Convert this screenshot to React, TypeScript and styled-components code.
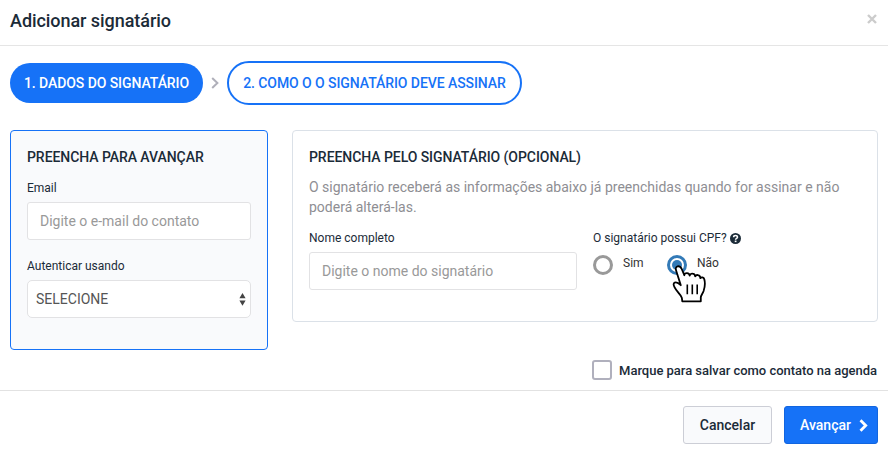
import React from "react";
import styled, { createGlobalStyle, css } from "styled-components";

const ink = "#1b2b38";
const blue = "#1672f7";

const GlobalStyle = createGlobalStyle`
  *, *::before, *::after { box-sizing: border-box; }
  body { margin: 0; background: #fff; color: ${ink}; font-family: Roboto, "Liberation Sans", sans-serif; }
`;

const Dialog = styled.main`
  display: flex;
  flex-direction: column;
  width: 888px;
  height: 457px;
  overflow: hidden;
  background: #fff;
`;

const Header = styled.header`
  display: flex;
  justify-content: space-between;
  height: 46px;
  padding: 9px 10px 0;
  border-bottom: 1px solid #e5e5e5;
`;

const Heading = styled.h1`
  margin: 0;
  font-size: 18px;
  line-height: 24px;
  font-weight: 500;
  letter-spacing: -0.06px;
`;

const Close = styled.button`
  width: 12px;
  height: 20px;
  padding: 0;
  border: 0;
  background: none;
  display: flex;
  align-items: center;
  justify-content: center;
`;

const Body = styled.section`
  flex: 1;
  padding: 15px 10px 0;
`;

const Steps = styled.nav`
  display: flex;
  align-items: center;
  height: 44px;
`;

const Step = styled.span<{ $active?: boolean }>`
  display: flex;
  align-items: center;
  justify-content: center;
  border-radius: 22px;
  font-size: 14px;
  font-weight: 500;
  letter-spacing: -0.07px;
  white-space: nowrap;
  ${({ $active }) =>
    $active
      ? css`width: 193px; height: 40px; background: ${blue}; color: #fff;`
      : css`width: 295px; height: 44px; border: 2px solid ${blue}; color: ${blue};`}
`;

const StepArrow = styled.svg`
  width: 8px;
  height: 12px;
  margin: 0 8px;
`;

const Panels = styled.div`
  display: grid;
  grid-template-columns: 258px 586px;
  column-gap: 24px;
  align-items: start;
  margin-top: 25px;
`;

const Panel = styled.section<{ $current?: boolean }>`
  height: ${({ $current }) => ($current ? 220 : 192)}px;
  padding: 16px;
  border: 1px solid ${({ $current }) => ($current ? blue : "#dbe1e8")};
  border-radius: 4px;
  background: ${({ $current }) => ($current ? "#f9fafc" : "#fff")};
`;

const PanelTitle = styled.h2`
  margin: 0;
  font-size: 14px;
  line-height: 20px;
  font-weight: 500;
  letter-spacing: -0.06px;
  white-space: nowrap;
`;

const Description = styled.p`
  margin: 10px 0 0;
  color: #8e8e93;
  font-size: 14px;
  line-height: 20px;
`;

const Field = styled.div<{ $top: number }>`
  margin-top: ${({ $top }) => $top}px;
`;

const Label = styled.label`
  display: flex;
  align-items: center;
  height: 20px;
  margin-bottom: 4px;
  font-size: 12px;
  white-space: nowrap;
`;

const Input = styled.input`
  display: block;
  width: 100%;
  height: 38px;
  padding: 0 12px;
  border: 1px solid #e2e2e4;
  border-radius: 3px;
  background: #fff;
  color: #555;
  font: 14px Roboto, sans-serif;
  outline: 0;
  &::placeholder { color: #999; opacity: 1; }
`;

const SelectBox = styled.div`
  display: flex;
  align-items: center;
  justify-content: space-between;
  height: 38px;
  padding: 0 4px 0 8px;
  border: 1px solid #e2e2e4;
  border-radius: 5px;
  background: #fff;
  color: #555;
  font-size: 14px;
`;

const FieldRow = styled.div`
  display: grid;
  grid-template-columns: 268px 1fr;
  column-gap: 16px;
`;

const HelpIcon = styled.svg`
  width: 11px;
  height: 11px;
  margin-left: 3px;
`;

const Radios = styled.div`
  display: flex;
  margin-top: 7px;
`;

const Option = styled.div`
  position: relative;
  display: flex;
  width: 74px;
  height: 20px;
  gap: 10px;
  color: #333;
  font-size: 12px;
  line-height: 16px;
`;

const RadioMark = styled.svg`
  width: 20px;
  height: 20px;
`;

const HandCursor = styled.svg`
  position: absolute;
  left: 4px;
  top: 10px;
  width: 36px;
  height: 40px;
`;

const SaveContact = styled.label`
  display: flex;
  align-items: center;
  justify-content: flex-end;
  gap: 7px;
  height: 20px;
  margin-top: 10px;
  padding-right: 1px;
  font-size: 13px;
  font-weight: 500;
  letter-spacing: -0.02px;
  white-space: nowrap;
`;

const Checkbox = styled.span`
  width: 20px;
  height: 20px;
  border: 2px solid #b0b0bd;
  border-radius: 3px;
  background: #fff;
`;

const Footer = styled.footer`
  display: flex;
  justify-content: flex-end;
  gap: 12px;
  height: 67px;
  padding: 15px 10px 0;
  border-top: 1px solid #e2e2e2;
`;

const Button = styled.button<{ $primary?: boolean }>`
  display: flex;
  align-items: center;
  justify-content: center;
  gap: 8px;
  width: ${({ $primary }) => ($primary ? 94 : 89)}px;
  height: 38px;
  padding: 0 0 0 ${({ $primary }) => ($primary ? 6 : 0)}px;
  border: 1px solid ${({ $primary }) => ($primary ? "#1265df" : "#ccced6")};
  border-radius: 3px;
  background: ${({ $primary }) => ($primary ? blue : "#f9fafc")};
  color: ${({ $primary }) => ($primary ? "#fff" : ink)};
  font: 500 14px Roboto, sans-serif;
`;

function Hand() {
  return (
    <HandCursor viewBox="0 0 36 40">
      <path
        d="M5.1 5.4C4.3 3.3 5.1 1.8 6.6 1.4C8.2 1 9.8 2 10.5 3.5L13.3 10.2C13.3 8.8 14.5 8 16 8.1C17.6 8.2 18.4 9.2 18.7 10.5C19.1 9 20.2 8.4 21.6 8.6C23.4 8.8 24 10 24.2 11.4C24.7 10.2 25.8 9.8 27.1 10.1C28.7 10.4 29.3 11.6 29.4 13.1C30.4 11.9 32.7 12.2 33.3 14.3C34.1 17.3 33.8 22.5 32.6 26C31.6 28.7 30 30.3 29.8 32.3L29.8 36.3H11.3L10.8 32.7C9.8 29.6 5.5 26.5 3.5 22.2C2.6 20.3 2 18.3 3.7 17.6C5.9 16.7 8.2 18.6 9.8 20.2Z"
        fill="#fff"
        stroke="#000"
        strokeWidth="1.8"
        strokeLinejoin="round"
      />
      <path d="M16.3 19.5V29.3M21.3 19.5V29.3M26.2 19.5V29.3" stroke="#000" strokeWidth="1.6" />
    </HandCursor>
  );
}

export default function App() {
  return (
    <>
      <GlobalStyle />
      <Dialog>
        <Header>
          <Heading>Adicionar signatário</Heading>
          <Close aria-label="Fechar">
            <svg width="12" height="12" viewBox="0 0 12 12">
              <path d="M2 2L10 10M10 2L2 10" stroke="#ccc" strokeWidth="2.4" />
            </svg>
          </Close>
        </Header>
        <Body>
          <Steps>
            <Step $active>1. DADOS DO SIGNATÁRIO</Step>
            <StepArrow viewBox="0 0 8 12">
              <path d="M1.2 1L6.4 6L1.2 11" fill="none" stroke="#b0b0ba" strokeWidth="2" />
            </StepArrow>
            <Step>2. COMO O O SIGNATÁRIO DEVE ASSINAR</Step>
          </Steps>
          <Panels>
            <Panel $current>
              <PanelTitle>PREENCHA PARA AVANÇAR</PanelTitle>
              <Field $top={11}>
                <Label>Email</Label>
                <Input placeholder="Digite o e-mail do contato" />
              </Field>
              <Field $top={16}>
                <Label>Autenticar usando</Label>
                <SelectBox>
                  SELECIONE
                  <svg width="7" height="13" viewBox="0 0 7 13">
                    <path d="M3.5 0L6.6 5.2H0.4ZM0.4 7.6H6.6L3.5 12.8Z" fill="#444" />
                  </svg>
                </SelectBox>
              </Field>
            </Panel>
            <Panel>
              <PanelTitle>PREENCHA PELO SIGNATÁRIO (OPCIONAL)</PanelTitle>
              <Description>
                O signatário receberá as informações abaixo já preenchidas quando for assinar e não
                poderá alterá-las.
              </Description>
              <FieldRow>
                <Field $top={11}>
                  <Label>Nome completo</Label>
                  <Input placeholder="Digite o nome do signatário" />
                </Field>
                <Field $top={11}>
                  <Label>
                    O signatário possui CPF?
                    <HelpIcon viewBox="0 0 10 10">
                      <circle cx="5" cy="5" r="5" fill={ink} />
                      <path d="M3.3 3.8C3.3 1.8 6.8 1.8 6.8 3.8C6.8 5 5.1 4.9 5.1 6.1" fill="none" stroke="#fff" strokeWidth="1.4" />
                      <path d="M4.3 6.9H5.9V8.3H4.3Z" fill="#fff" />
                    </HelpIcon>
                  </Label>
                  <Radios>
                    <Option>
                      <RadioMark viewBox="0 0 20 20">
                        <circle cx="10" cy="10" r="8.5" fill="#fff" stroke="#999" strokeWidth="3" />
                      </RadioMark>
                      Sim
                    </Option>
                    <Option>
                      <RadioMark viewBox="0 0 20 20">
                        <circle cx="10" cy="10" r="8.5" fill="#fff" stroke="#337ab7" strokeWidth="3" />
                        <circle cx="10" cy="10" r="5" fill="#337ab7" />
                      </RadioMark>
                      Não
                      <Hand />
                    </Option>
                  </Radios>
                </Field>
              </FieldRow>
            </Panel>
          </Panels>
          <SaveContact>
            <Checkbox />
            Marque para salvar como contato na agenda
          </SaveContact>
        </Body>
        <Footer>
          <Button>Cancelar</Button>
          <Button $primary>
            Avançar
            <svg width="9" height="13" viewBox="0 0 9 13">
              <path d="M1.5 1.3L6.7 6.5L1.5 11.7" fill="none" stroke="#fff" strokeWidth="2.8" />
            </svg>
          </Button>
        </Footer>
      </Dialog>
    </>
  );
}
